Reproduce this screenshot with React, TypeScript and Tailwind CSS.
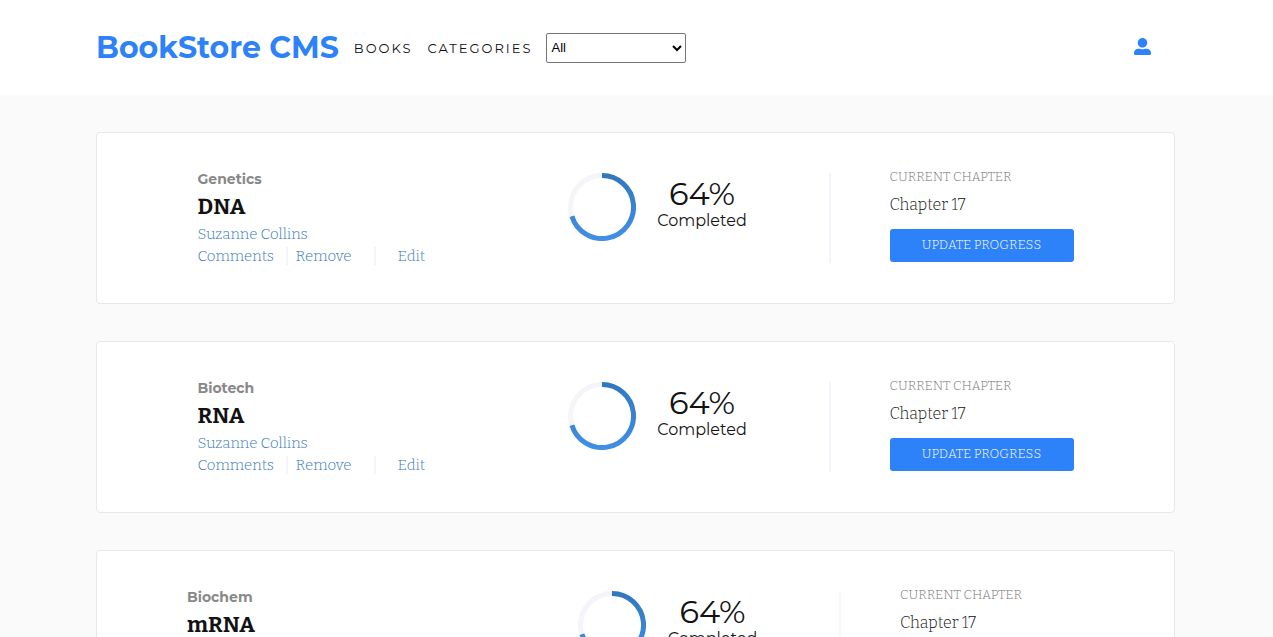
import { FaUserAlt } from 'react-icons/fa';

type Book = {
  id: number;
  category: string;
  title: string;
  author: string;
  progress: string;
  chapter: string;
  infoWidth: string;
};

const books: Book[] = [
  { id: 1, category: 'Genetics', title: 'DNA', author: 'Suzanne Collins', progress: '64%', chapter: 'Chapter 17', infoWidth: 'w-[370px]' },
  { id: 2, category: 'Biotech', title: 'RNA', author: 'Suzanne Collins', progress: '64%', chapter: 'Chapter 17', infoWidth: 'w-[370px]' },
  { id: 3, category: 'Biochem', title: 'mRNA', author: 'Suzanne Collins', progress: '64%', chapter: 'Chapter 17', infoWidth: 'w-[391px]' },
];

const sans = "font-['Montserrat','Inter',sans-serif]";
const slab = "font-['Roboto_Slab','Bitter','Liberation_Serif',serif]";

function ProgressRing({ id }: { id: number }) {
  return (
    <svg className="size-[68px] shrink-0" viewBox="0 0 68 68" fill="none" aria-hidden="true">
      <defs>
        <linearGradient id={`ring-${id}`} x1="34" y1="0" x2="34" y2="68" gradientUnits="userSpaceOnUse">
          <stop offset="0" stopColor="#3177bd" />
          <stop offset="1" stopColor="#3f90e8" />
        </linearGradient>
      </defs>
      <circle cx="34" cy="34" r="31.5" stroke="#f4f4fa" strokeWidth="5" />
      <path d="M34 2.5A31.5 31.5 0 1 1 3.9 43.2" stroke={`url(#ring-${id})`} strokeWidth="5" />
    </svg>
  );
}

function BookCard({ book }: { book: Book }) {
  return (
    <li className="flex h-[172px] justify-center rounded-[4px] border border-[#e8e8e8] bg-white pt-9">
      <div className={`${book.infoWidth} ${slab} shrink-0 text-[15px] leading-[22px] font-light text-[#3578b8]`}>
        <p className={`${sans} text-[14px] leading-[20px] font-bold text-[#888888]`}>{book.category}</p>
        <h2 className="pt-[2px] text-[22px] leading-[32px] font-bold text-[#121212]">{book.title}</h2>
        <p>{book.author}</p>
        <div className="flex items-center">
          <button type="button" className="w-[88px] text-left">Comments</button>
          <span className="h-[18px] w-[2px] bg-[#f4f4fa]" />
          <button type="button" className="w-[86px] pl-2 text-left">Remove</button>
          <span className="h-[18px] w-[2px] bg-[#f4f4fa]" />
          <button type="button" className="pl-[22px] text-left">Edit</button>
        </div>
      </div>
      <div className="flex w-[261px] shrink-0 pt-1">
        <ProgressRing id={book.id} />
        <div className={`${sans} w-[133px] pt-1 text-center text-[#121212]`}>
          <p className="text-[32px] leading-[34px]">{book.progress}</p>
          <p className="text-[16px] leading-[20px]">Completed</p>
        </div>
      </div>
      <div className={`${slab} mt-1 h-[90px] shrink-0 border-l-2 border-[#f4f4fa] pl-[59px] font-light`}>
        <p className="-mt-1 text-[13px] leading-[16px] text-[#777777] uppercase">Current Chapter</p>
        <p className="mt-2 pt-[2px] text-[16px] leading-[20px] text-[#121212]">{book.chapter}</p>
        <button type="button" className="mt-[14px] flex h-[33px] w-[184px] justify-center rounded-[3px] bg-[#2d81f9] pt-[6px] text-[13px] text-white uppercase">
          Update Progress
        </button>
      </div>
    </li>
  );
}

export default function App() {
  return (
    <div className="min-h-screen bg-[#fafafa]">
      <header className={`${sans} flex h-[95px] items-center bg-white pr-[122px] pl-24`}>
        <h1 className="text-[30px] leading-[40px] font-bold text-[#2d81f9]">BookStore CMS</h1>
        <nav className="ml-[15px] flex items-center gap-[15px] pt-[2px] text-[13px] tracking-[2px] text-[#121212] uppercase">
          <a href="#books">Books</a>
          <a href="#categories">Categories</a>
        </nav>
        <select aria-label="Category" className="ml-[14px] h-[30px] w-[140px] rounded-[2px] border border-[#767676] bg-white font-['Liberation_Sans',sans-serif] text-[13px] text-black">
          <option>All</option>
          <option>Genetics</option>
          <option>Biotech</option>
          <option>Biochem</option>
        </select>
        <button type="button" aria-label="Account" className="ml-auto pb-[2px] text-[17px] text-[#2d81f9]">
          <FaUserAlt />
        </button>
      </header>
      <main className="pt-[37px] pr-[98px] pl-24">
        <ul className="flex flex-col gap-[37px]">
          {books.map((book) => (
            <BookCard key={book.id} book={book} />
          ))}
        </ul>
      </main>
    </div>
  );
}
